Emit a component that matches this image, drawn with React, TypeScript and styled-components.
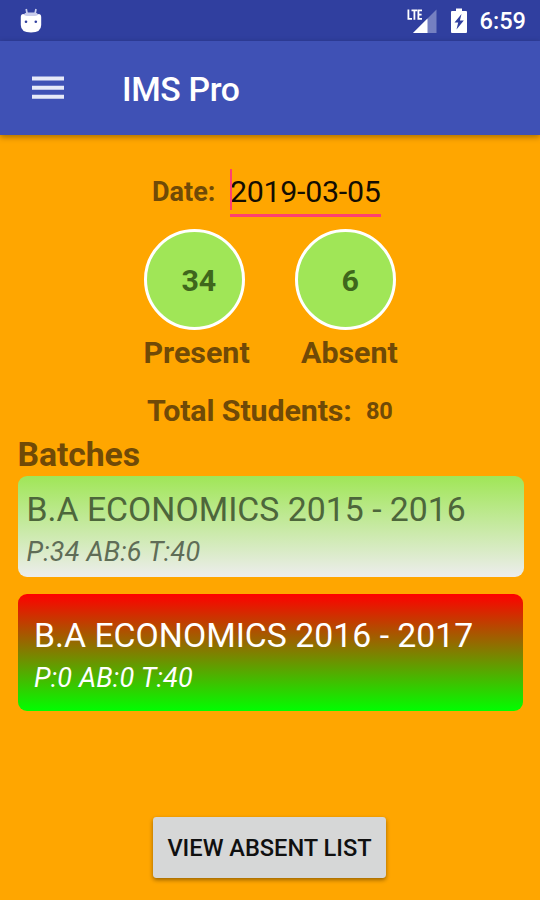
import React from "react";
import styled, { createGlobalStyle } from "styled-components";

const GlobalStyle = createGlobalStyle`
  * { box-sizing: border-box; }
  body { margin: 0; background: #ffa600; font-family: Roboto, sans-serif; }
`;

const Screen = styled.main`
  display: flex;
  flex-direction: column;
  width: 540px;
  height: 900px;
  overflow: hidden;
  background: #ffa600;
`;

const StatusBar = styled.div`
  display: flex;
  align-items: center;
  justify-content: space-between;
  height: 41px;
  flex: none;
  padding: 0 14px 0 20px;
  background: #303f9f;
  color: #fff;
`;

const StatusIcons = styled.div`
  display: flex;
  align-items: center;
`;

const Clock = styled.span`
  margin-left: 12px;
  padding-top: 2px;
  font-size: 23.6px;
  font-weight: 500;
  line-height: 41px;
`;

const AppBar = styled.header`
  display: flex;
  align-items: center;
  height: 94px;
  flex: none;
  padding-left: 32px;
  background: #3f51b5;
  box-shadow: 0 2px 6px rgba(0, 0, 0, 0.35);
  color: #fff;
`;

const AppTitle = styled.h1`
  margin: 4px 0 0 58px;
  font-size: 33.75px;
  font-weight: 500;
  line-height: 40px;
  letter-spacing: -0.35px;
`;

const Content = styled.section`
  display: flex;
  flex-direction: column;
  flex: 1;
  padding: 34px 16px 0 17.5px;
`;

const DateRow = styled.label`
  display: flex;
  height: 48px;
  padding-left: 134.5px;
`;

const Label = styled.span<{ $size: number; $width?: number; $spacing?: number }>`
  width: ${(p) => (p.$width ? `${p.$width}px` : "auto")};
  font-size: ${(p) => p.$size}px;
  font-weight: 700;
  line-height: 46px;
  letter-spacing: ${(p) => p.$spacing ?? 0}px;
  color: #704a07;
  white-space: nowrap;
`;

const DateField = styled.span`
  width: 150.5px;
  height: 48px;
  border-bottom: 3px solid #ff4070;
  font-size: 30.4px;
  line-height: 45px;
  letter-spacing: -0.3px;
  color: #130d02;
  white-space: nowrap;
  position: relative;

  &::before {
    content: "";
    position: absolute;
    left: 0;
    top: 0;
    width: 2px;
    height: 41px;
    background: #ff4070;
  }
`;

const Counters = styled.div`
  display: flex;
  gap: 50.5px;
  margin: 12px 0 0 126px;
`;

const Counter = styled.div`
  display: flex;
  flex-direction: column;
  width: 101px;
`;

const Disc = styled.div<{ $indent: number }>`
  width: 101px;
  height: 101px;
  padding-left: ${(p) => p.$indent}px;
  border: 3.4px solid #fff;
  border-radius: 50%;
  background: #a0e657;
  font-size: 30.4px;
  font-weight: 700;
  line-height: 97px;
  letter-spacing: -0.3px;
  color: #3f671c;
`;

const Caption = styled.span<{ $indent?: number }>`
  margin-left: ${(p) => p.$indent ?? 0}px;
  font-size: 30.4px;
  font-weight: 700;
  line-height: 45px;
  color: #704a07;
  white-space: nowrap;
`;

const TotalRow = styled.div`
  display: flex;
  height: 44px;
  margin: 13px 0 0 129.5px;
`;

const Heading = styled.h2`
  margin: 0;
  height: 44px;
  font-size: 33.75px;
  font-weight: 700;
  line-height: 46px;
  letter-spacing: -0.1px;
  color: #704a07;
`;

const Batch = styled.article<{ $active?: boolean }>`
  display: flex;
  flex-direction: column;
  width: ${(p) => (p.$active ? 505.5 : 506.5)}px;
  height: ${(p) => (p.$active ? 117 : 101)}px;
  margin-bottom: 17px;
  padding: ${(p) => (p.$active ? "19px 16.5px 0" : "11px 9px 0")};
  border-radius: 9px;
  background: ${(p) => (p.$active ? "linear-gradient(#ff0000, #00ff00)" : "linear-gradient(#a0e657, #ededed)")};
  color: ${(p) => (p.$active ? "#fff" : "#4d663b")};
`;

const BatchName = styled.span`
  font-size: 33.75px;
  line-height: 46px;
  letter-spacing: 0.02px;
  white-space: nowrap;
`;

const BatchStats = styled.span<{ $active?: boolean }>`
  font-size: 27px;
  font-style: italic;
  line-height: 38px;
  letter-spacing: 0.18px;
  color: ${(p) => (p.$active ? "#fff" : "#5f6d57")};
  white-space: nowrap;
`;

const ListButton = styled.button`
  width: 233px;
  height: 61px;
  margin: 89px 0 0 135.5px;
  padding: 1px 0 0;
  border: 0;
  border-radius: 3.4px;
  background: #d6d7d7;
  box-shadow: 0 2px 4px rgba(0, 0, 0, 0.4);
  font: 500 23.6px Roboto, sans-serif;
  color: #101010;
  white-space: nowrap;
`;

const DebugIcon = () => (
  <svg width="22" height="26" viewBox="0 0 22 26">
    <path d="M6.2 1 7.2 6M16 1 15 6" stroke="#c9cdec" strokeWidth="1.7" />
    <path d="M3.5 7Q4.5 4.5 7 4.5H15Q17.5 4.5 18.5 7V9H3.5Z" fill="#c9cdec" />
    <path d="M.8 9Q.8 6 3.5 6Q4.5 8 7 8H15Q17.5 8 18.5 6Q21.2 6 21.2 9V17Q21.2 24.5 11 24.5T.8 17Z" fill="#fff" />
    <circle cx="6" cy="13.7" r="1.3" fill="#303f9f" />
    <circle cx="15.8" cy="13.7" r="1.3" fill="#303f9f" />
  </svg>
);

const SignalIcon = () => (
  <svg width="30" height="26" viewBox="0 0 30 26">
    <path d="M29.5 1.5V25H6Z" fill="#7580c1" />
    <path d="M20.5 10.5V25H6Z" fill="#fff" />
    <path d="M0 0H16.5V12.5H0Z" fill="#303f9f" />
    <path d="M1.4 1.5V10.8H5M4.5 2.4H10.2M7.4 2.4V11.7M15 2.4H11.4V10.8H15M11.4 6.6H14.6" fill="none" stroke="#fff" strokeWidth="1.8" />
  </svg>
);

const BatteryIcon = () => (
  <svg width="18" height="26" viewBox="0 0 18 26">
    <path d="M6 .5H12V3H16Q17 3 17 4V24Q17 25 16 25H2Q1 25 1 24V4Q1 3 2 3H6Z" fill="#fff" />
    <path d="M11.5 6 4.5 14.5H8.2L6.5 21.5 13.8 12.5H9.9Z" fill="#303f9f" />
  </svg>
);

const MenuIcon = () => (
  <svg width="32" height="24" viewBox="0 0 32 24">
    <path d="M0 2.5H32M0 11.7H32M0 20.7H32" stroke="#e6e9f8" strokeWidth="4" />
  </svg>
);

const SignalSlot = styled.span`
  display: flex;
  margin-right: 13px;
`;

export default function App() {
  return (
    <>
      <GlobalStyle />
      <Screen>
        <StatusBar>
          <DebugIcon />
          <StatusIcons>
            <SignalSlot><SignalIcon /></SignalSlot>
            <BatteryIcon />
            <Clock>6:59</Clock>
          </StatusIcons>
        </StatusBar>
        <AppBar>
          <MenuIcon />
          <AppTitle>IMS Pro</AppTitle>
        </AppBar>
        <Content>
          <DateRow>
            <Label $size={27} $width={78}>Date:</Label>
            <DateField>2019-03-05</DateField>
          </DateRow>
          <Counters>
            <Counter>
              <Disc $indent={35}>34</Disc>
              <Caption>Present</Caption>
            </Counter>
            <Counter>
              <Disc $indent={43.5}>6</Disc>
              <Caption $indent={6}>Absent</Caption>
            </Counter>
          </Counters>
          <TotalRow>
            <Label $size={30.4} $width={219} $spacing={-0.12}>Total Students:</Label>
            <Label $size={23.6} $spacing={-0.2}>80</Label>
          </TotalRow>
          <Heading>Batches</Heading>
          <Batch>
            <BatchName>B.A ECONOMICS 2015 - 2016</BatchName>
            <BatchStats>P:34 AB:6 T:40</BatchStats>
          </Batch>
          <Batch $active>
            <BatchName>B.A ECONOMICS 2016 - 2017</BatchName>
            <BatchStats $active>P:0 AB:0 T:40</BatchStats>
          </Batch>
          <ListButton type="button">VIEW ABSENT LIST</ListButton>
        </Content>
      </Screen>
    </>
  );
}
